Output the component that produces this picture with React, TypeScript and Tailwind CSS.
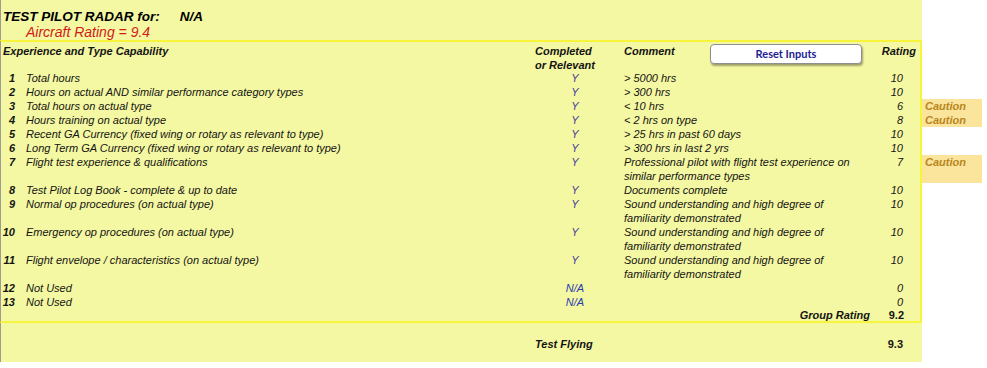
import React from 'react'

type Item = {
  n: number
  desc: string
  done: string
  comment: string
  rating: string
  caution?: boolean
}

const familiar = 'Sound understanding and high degree of familiarity demonstrated'

const items: Item[] = [
  { n: 1, desc: 'Total hours', done: 'Y', comment: '> 5000 hrs', rating: '10' },
  { n: 2, desc: 'Hours on actual AND similar performance category types', done: 'Y', comment: '> 300 hrs', rating: '10' },
  { n: 3, desc: 'Total hours on actual type', done: 'Y', comment: '< 10 hrs', rating: '6', caution: true },
  { n: 4, desc: 'Hours training on actual type', done: 'Y', comment: '< 2 hrs on type', rating: '8', caution: true },
  { n: 5, desc: 'Recent GA Currency (fixed wing or rotary as relevant to type)', done: 'Y', comment: '> 25 hrs in past 60 days', rating: '10' },
  { n: 6, desc: 'Long Term GA Currency (fixed wing or rotary as relevant to type)', done: 'Y', comment: '> 300 hrs in last 2 yrs', rating: '10' },
  { n: 7, desc: 'Flight test experience & qualifications', done: 'Y', comment: 'Professional pilot with flight test experience on similar performance types', rating: '7', caution: true },
  { n: 8, desc: 'Test Pilot Log Book - complete & up to date', done: 'Y', comment: 'Documents complete', rating: '10' },
  { n: 9, desc: 'Normal op procedures (on actual type)', done: 'Y', comment: familiar, rating: '10' },
  { n: 10, desc: 'Emergency op procedures (on actual type)', done: 'Y', comment: familiar, rating: '10' },
  { n: 11, desc: 'Flight envelope / characteristics (on actual type)', done: 'Y', comment: familiar, rating: '10' },
  { n: 12, desc: 'Not Used', done: 'N/A', comment: '', rating: '0' },
  { n: 13, desc: 'Not Used', done: 'N/A', comment: '', rating: '0' },
]

function Row({ item }: { item: Item }) {
  return (
    <div className="flex">
      <div className="flex w-[922px] border-l border-r-2 border-l-[#9c9c94] border-r-[#f7f43c] bg-[#f4f8a2]">
        <div className="w-[14px] text-right font-bold">{item.n}</div>
        <div className="w-[520px] pl-[11px]">{item.desc}</div>
        <div className={`w-[80px] text-center ${item.done === 'Y' ? 'text-[#44449a]' : 'text-[#2b3bb0]'}`}>{item.done}</div>
        <div className="w-[245px] pl-[9px]">{item.comment}</div>
        <div className="w-[43px] text-right">{item.rating}</div>
      </div>
      {item.caution ? (
        <div className="w-[60px] bg-[#fbe49c] pl-[3px] font-bold text-[#b8861c]">Caution</div>
      ) : (
        <div className="w-[60px]" />
      )}
    </div>
  )
}

export default function App() {
  return (
    <div className="h-[368px] w-[987px] bg-white text-[11px] italic leading-[14px] text-[#141414] [font-family:'Liberation_Sans',Arial,sans-serif]">
      {/* Title block */}
      <div className="h-[40px] w-[922px] border-l border-[#9c9c94] bg-[#f4f8a2] pt-[9px]">
        <div className="pl-[2px] text-[13.5px] font-bold leading-[16px] text-black">
          TEST PILOT RADAR for:<span className="ml-[20px]">N/A</span>
        </div>
        <div className="pl-[25px] text-[14px] leading-[15px] text-[#d11a1a]">Aircraft Rating = 9.4</div>
      </div>

      {/* Header row */}
      <div className="flex">
        <div className="flex h-[31px] w-[922px] border-l border-r-2 border-t-2 border-l-[#9c9c94] border-r-[#f7f43c] border-t-[#f7f43c] bg-[#f4f8a2] pt-[2px] font-bold">
          <div className="w-[534px] pl-[2px]">Experience and Type Capability</div>
          <div className="w-[89px]">
            <div>Completed</div>
            <div>or Relevant</div>
          </div>
          <div className="w-[86px]">Comment</div>
          <div className="flex h-[20px] w-[152px] items-center justify-center rounded-[4px] border border-[#8f8f8f] bg-white text-[11px] not-italic text-[#1c1c96] shadow-[1px_2px_2px_rgba(0,0,0,0.35)] [font-family:Lato,'Open_Sans',sans-serif]">
            Reset Inputs
          </div>
          <div className="w-[54px] text-right">Rating</div>
        </div>
        <div className="w-[60px]" />
      </div>

      {items.map((item) => (
        <Row key={item.n} item={item} />
      ))}

      {/* Group rating */}
      <div className="flex">
        <div className="flex h-[14px] w-[922px] border-b-2 border-l border-r-2 border-b-[#f7f43c] border-l-[#9c9c94] border-r-[#f7f43c] bg-[#f4f8a2] font-bold leading-[13px]">
          <div className="w-[869px] text-right">Group Rating</div>
          <div className="w-[34px] text-right not-italic">9.2</div>
        </div>
        <div className="w-[60px]" />
      </div>

      {/* Test flying */}
      <div className="flex h-[39px] w-[922px] border-l border-[#9c9c94] bg-[#f4f8a2] pt-[14px] font-bold">
        <div className="w-[534px]" />
        <div className="w-[347px]">Test Flying</div>
        <div className="w-[21px] text-right not-italic">9.3</div>
      </div>
    </div>
  )
}
